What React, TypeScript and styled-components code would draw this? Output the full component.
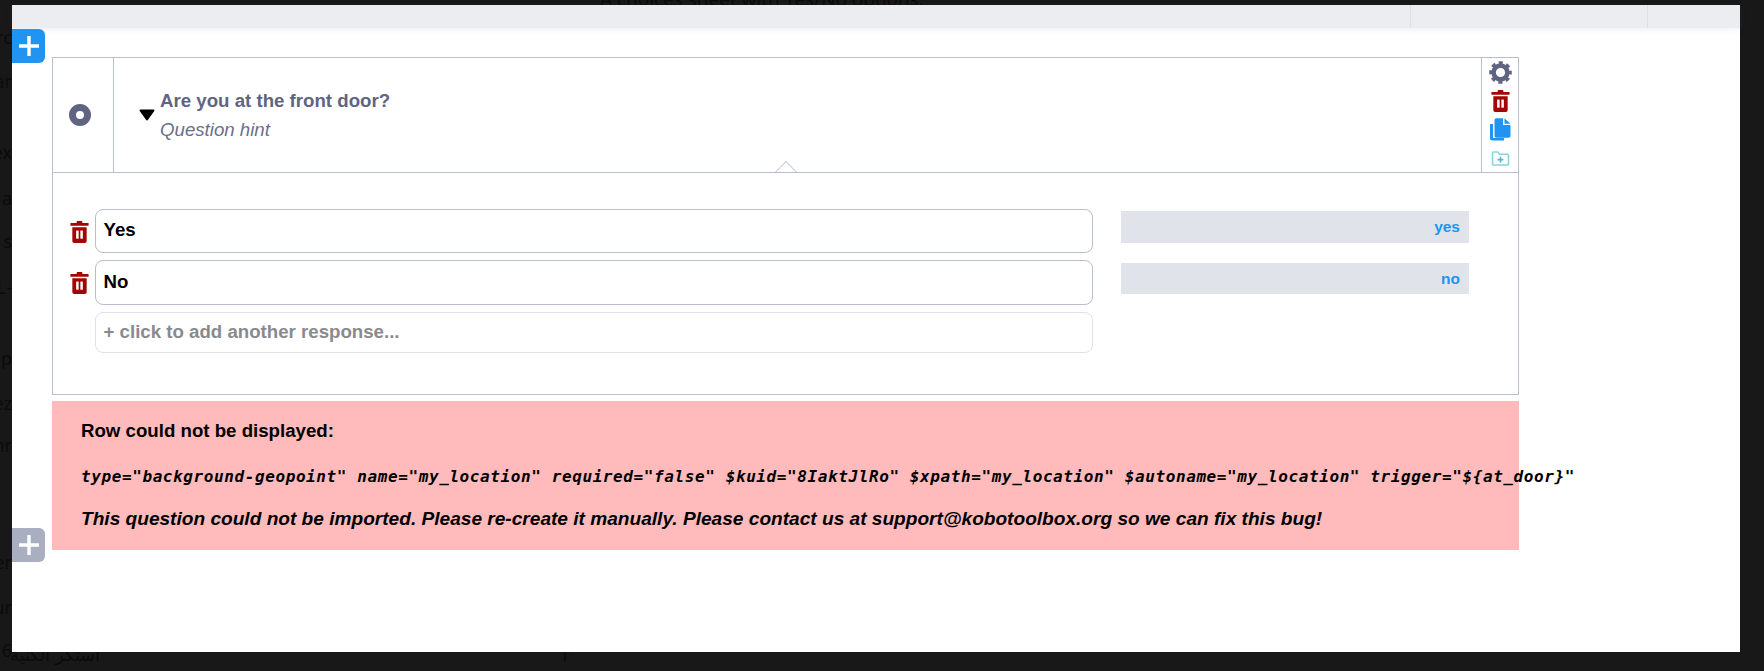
import React from "react"
import styled, { createGlobalStyle } from "styled-components"

const GlobalStyle = createGlobalStyle`
    html, body {
        margin: 0;
        height: 100%;
        background: #181818;
        overflow: hidden;
        font-family: "Liberation Sans", Arial, sans-serif;
    }
`

const backdropLines: [number, string][] = [
    [37, "rc"],
    [81, "ar"],
    [152, "ex"],
    [198, "a"],
    [241, "s"],
    [287, "L-"],
    [358, "v p"],
    [403, "ez"],
    [445, "nr"],
    [562, "er"],
    [607, "ur"],
    [650, "6"],
]

const codeLine = 'type="background-geopoint" name="my_location" required="false" $kuid="8IaktJlRo" $xpath="my_location" $autoname="my_location" trigger="${at_door}"'

const GearIcon = () => (
    <svg width="23" height="23" viewBox="0 0 24 24">
        <circle cx="12" cy="12" r="7.2" fill="none" stroke="#5f6482" strokeWidth="4.8" />
        <circle cx="12" cy="12" r="10" fill="none" stroke="#5f6482" strokeWidth="3.6" strokeDasharray="4.2 3.65" strokeDashoffset="2.1" />
    </svg>
)

const TrashIcon = () => (
    <svg width="19" height="22" viewBox="0 0 19 23">
        <rect x="6.5" y="0" width="6" height="3" rx="1" fill="#a30505" />
        <rect x="0" y="2" width="19" height="3" rx="0.6" fill="#a30505" />
        <path d="M2 6.5h15v14.5a2 2 0 0 1-2 2H4a2 2 0 0 1-2-2z" fill="#a30505" />
        <rect x="6" y="10" width="2.6" height="8.5" fill="#fff" />
        <rect x="10.4" y="10" width="2.6" height="8.5" fill="#fff" />
    </svg>
)

const CopyIcon = () => (
    <svg width="22" height="23" viewBox="0 0 22 23">
        <path d="M1 6v14a2.5 2.5 0 0 0 2.5 2.5H15v-2.6H4V6z" fill="#2094f3" />
        <path d="M5.500 2A1.800 1.800 0 0 1 7.300 0.200H14V7h7.500v11a1.800 1.800 0 0 1-1.800 1.800H7.300A1.800 1.800 0 0 1 5.500 18z" fill="#2094f3" />
        <path d="M15.500 0.300 21.500 5.800h-6z" fill="#2094f3" />
    </svg>
)

const FolderPlusIcon = () => (
    <svg width="19" height="15" viewBox="0 0 19 16">
        <path d="M1 2.200A1.200 1.200 0 0 1 2.200 1h4.300l2 2.400h8.300A1.200 1.200 0 0 1 18 4.600v9.200a1.200 1.200 0 0 1-1.200 1.200H2.200A1.200 1.200 0 0 1 1 13.800z" fill="none" stroke="#85d6de" strokeWidth="1.7" />
        <path d="M9.500 6.200v6M6.500 9.200h6" stroke="#4fb9c6" strokeWidth="1.7" />
    </svg>
)

const PlusIcon = () => (
    <svg width="22" height="22" viewBox="0 0 22 22">
        <path d="M11 1v20M1 11h20" stroke="#fff" strokeWidth="3.4" />
    </svg>
)

const CaretIcon = () => (
    <svg width="16" height="12" viewBox="0 0 16 12">
        <path d="M1.500 1.500h13L8 10.500z" fill="#000" stroke="#000" strokeWidth="2" strokeLinejoin="round" />
    </svg>
)

const App = () => {
    return (
        <Page>
            <GlobalStyle />
            <BackdropTop>A choices sheet with Yes/No options.</BackdropTop>
            {backdropLines.map(([top, text]) => (
                <BackdropLine key={top} $top={top}>
                    {text}
                </BackdropLine>
            ))}
            <BackdropBottom>
                <span>استكر الكنية</span>
                <span>T'</span>
            </BackdropBottom>

            <Window>
                <TopBar>
                    <TopBarCell $width={237} />
                    <TopBarCell $width={93} />
                </TopBar>

                <Content>
                    <RowGroup>
                        <AddButton $top={-28} $active>
                            <PlusIcon />
                        </AddButton>
                        <Card>
                            <CardHeader>
                                <TypeCell>
                                    <RadioIcon />
                                </TypeCell>
                                <QuestionCell>
                                    <CaretIcon />
                                    <QuestionText>
                                        <QuestionTitle>Are you at the front door?</QuestionTitle>
                                        <QuestionHint>Question hint</QuestionHint>
                                    </QuestionText>
                                </QuestionCell>
                                <ActionCell>
                                    <GearIcon />
                                    <TrashIcon />
                                    <CopyIcon />
                                    <FolderPlusIcon />
                                </ActionCell>
                                <Notch />
                            </CardHeader>

                            <CardBody>
                                <OptionRow>
                                    <OptionIcon>
                                        <TrashIcon />
                                    </OptionIcon>
                                    <OptionInput $height={44}>Yes</OptionInput>
                                    <OptionCode $height={32} $offset={2}>
                                        yes
                                    </OptionCode>
                                </OptionRow>
                                <OptionRow>
                                    <OptionIcon>
                                        <TrashIcon />
                                    </OptionIcon>
                                    <OptionInput $height={45}>No</OptionInput>
                                    <OptionCode $height={31} $offset={3}>
                                        no
                                    </OptionCode>
                                </OptionRow>
                                <OptionRow>
                                    <OptionIcon />
                                    <OptionInput $height={41} $placeholder>
                                        + click to add another response...
                                    </OptionInput>
                                </OptionRow>
                            </CardBody>
                        </Card>
                    </RowGroup>

                    <RowGroup>
                        <ErrorBox>
                            <ErrorTitle>Row could not be displayed:</ErrorTitle>
                            <ErrorCode>{codeLine}</ErrorCode>
                            <ErrorNote>
                                This question could not be imported. Please re-create it manually. Please contact us at support@kobotoolbox.org so we can fix this bug!
                            </ErrorNote>
                        </ErrorBox>
                        <AddButton $top={127}>
                            <PlusIcon />
                        </AddButton>
                    </RowGroup>
                </Content>
            </Window>
        </Page>
    )
}

const Page = styled.div`
    position: relative;
    width: 1764px;
    height: 671px;
    padding: 5px 24px 19px 12px;
    box-sizing: border-box;
    overflow: hidden;
`

const BackdropTop = styled.div`
    position: absolute;
    top: -14px;
    left: 600px;
    font: 18.9px "Noto Sans", sans-serif;
    color: #0b0b0b;
    white-space: nowrap;
`

const BackdropLine = styled.div<{ $top: number }>`
    position: absolute;
    top: ${(p) => p.$top - 12}px;
    left: 0;
    width: 12px;
    overflow: hidden;
    display: flex;
    justify-content: flex-end;
    font: 18px "Noto Sans", sans-serif;
    color: #0b0b0b;
    white-space: nowrap;
`

const BackdropBottom = styled.div`
    position: absolute;
    top: 642px;
    left: 10px;
    display: flex;
    gap: 460px;
    font: 18px "Noto Sans", sans-serif;
    color: #0b0b0b;
    white-space: nowrap;
`

const Window = styled.div`
    position: relative;
    height: 100%;
    background: #fff;
`

const TopBar = styled.div`
    display: flex;
    justify-content: flex-end;
    height: 23px;
    background: #ecedf1;
    box-shadow: 0 1px 6px rgba(90, 95, 120, 0.12);
`

const TopBarCell = styled.div<{ $width: number }>`
    width: ${(p) => p.$width}px;
    box-sizing: border-box;
    border-left: 1px solid #e0e1e6;
`

const Content = styled.div`
    display: flex;
    flex-direction: column;
    gap: 6px;
    width: 1467px;
    padding: 29px 0 0 40px;
`

const RowGroup = styled.div`
    position: relative;
`

const AddButton = styled.div<{ $top: number; $active?: boolean }>`
    position: absolute;
    top: ${(p) => p.$top}px;
    left: -40px;
    display: flex;
    align-items: center;
    justify-content: center;
    width: 33px;
    height: 34px;
    border-radius: 0 6px 6px 0;
    background: ${(p) => (p.$active ? "#2094f3" : "#a9aec0")};
`

const Card = styled.div`
    border: 1px solid #b9bdce;
`

const CardHeader = styled.div`
    position: relative;
    display: flex;
    height: 114px;
    border-bottom: 1px solid #b9bdce;
`

const TypeCell = styled.div`
    display: flex;
    align-items: center;
    justify-content: center;
    width: 61px;
    padding-right: 7px;
    box-sizing: border-box;
    border-right: 1px solid #b9bdce;
`

const RadioIcon = styled.div`
    width: 8px;
    height: 8px;
    border: 7px solid #5f6482;
    border-radius: 50%;
`

const QuestionCell = styled.div`
    flex: 1;
    display: flex;
    align-items: center;
    gap: 5px;
    padding-left: 25px;
`

const QuestionText = styled.div`
    display: flex;
    flex-direction: column;
    gap: 8px;
`

const QuestionTitle = styled.div`
    font-size: 18.67px;
    line-height: 21px;
    font-weight: bold;
    color: #5f6482;
`

const QuestionHint = styled.div`
    font-size: 18.67px;
    line-height: 21px;
    font-style: italic;
    color: #6b6f8a;
`

const ActionCell = styled.div`
    display: flex;
    flex-direction: column;
    align-items: center;
    gap: 6px;
    width: 37px;
    padding-top: 3px;
    box-sizing: border-box;
    border-left: 1px solid #b9bdce;

    & > svg:last-of-type {
        margin-top: 4px;
    }
`

const Notch = styled.div`
    position: absolute;
    left: 725px;
    bottom: -8px;
    width: 15px;
    height: 15px;
    background: #fff;
    border-top: 1px solid #b9bdce;
    border-left: 1px solid #b9bdce;
    transform: rotate(45deg);
    clip-path: polygon(0 0, 100% 0, 0 100%);
`

const CardBody = styled.div`
    display: flex;
    flex-direction: column;
    gap: 7px;
    padding: 36px 0 41px;
`

const OptionRow = styled.div`
    display: flex;
    align-items: flex-start;
`

const OptionIcon = styled.div`
    display: flex;
    justify-content: center;
    width: 42px;
    padding: 12px 0 0 10px;
    box-sizing: border-box;
    flex-shrink: 0;
`

const OptionInput = styled.div<{ $height: number; $placeholder?: boolean }>`
    display: flex;
    align-items: center;
    width: 998px;
    height: ${(p) => p.$height}px;
    padding: 0 0 2px 7.5px;
    box-sizing: border-box;
    border: 1px solid ${(p) => (p.$placeholder ? "#dfe1e9" : "#b9bdce")};
    border-radius: 8px;
    font-size: 18.67px;
    font-weight: bold;
    color: ${(p) => (p.$placeholder ? "#8a8a8e" : "#000")};
`

const OptionCode = styled.div<{ $height: number; $offset: number }>`
    display: flex;
    align-items: center;
    justify-content: flex-end;
    width: 348px;
    height: ${(p) => p.$height}px;
    margin: ${(p) => p.$offset}px 0 0 28px;
    padding-right: 9px;
    box-sizing: border-box;
    background: #e0e3ea;
    font-size: 15.5px;
    font-weight: bold;
    color: #2094f3;
`

const ErrorBox = styled.div`
    display: flex;
    flex-direction: column;
    height: 149px;
    padding: 19px 0 0 29px;
    box-sizing: border-box;
    background: #ffbbbb;
    color: #000;
`

const ErrorTitle = styled.div`
    font-size: 18.67px;
    line-height: 21px;
    font-weight: bold;
`

const ErrorCode = styled.div`
    margin-top: 25px;
    font-family: "DejaVu Sans Mono", monospace;
    font-size: 16px;
    line-height: 21px;
    font-weight: bold;
    font-style: italic;
    letter-spacing: 0.6px;
    white-space: nowrap;
`

const ErrorNote = styled.div`
    margin-top: 21px;
    font-size: 19.1px;
    line-height: 21px;
    font-weight: bold;
    font-style: italic;
    white-space: nowrap;
`

export default App
